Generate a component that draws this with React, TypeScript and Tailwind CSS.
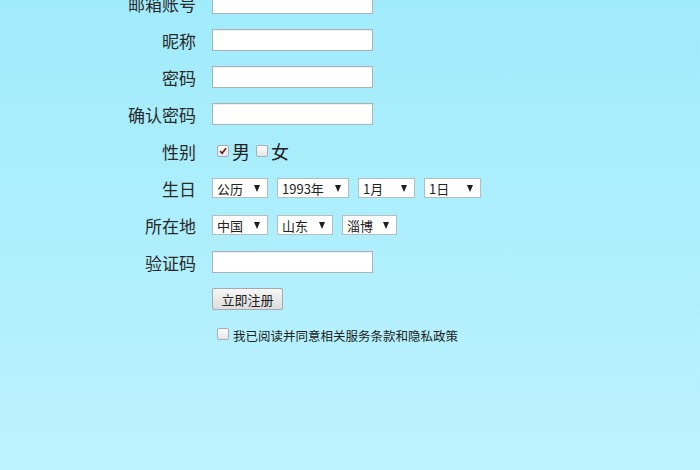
import { useState } from "react";

const FONT = "font-['Noto_Sans_CJK_SC',_'Noto_Sans',_sans-serif]";

function Row({ label, children }: { label?: string; children: React.ReactNode }) {
  return (
    <div className="flex h-[22px] items-center">
      <label className="w-[196px] shrink-0 text-right text-[17px] leading-none text-[#2a2a2a]">{label}</label>
      <div className="ml-[16px] flex items-center">{children}</div>
    </div>
  );
}

function TextInput({ type = "text" }: { type?: string }) {
  return (
    <input
      type={type}
      className="h-[22px] w-[161px] border border-[#a9b3ba] bg-white px-1 text-[13px] shadow-[inset_0_1px_1px_rgba(0,0,0,0.08)] outline-none"
    />
  );
}

function Select({ value, width }: { value: string; width: string }) {
  return (
    <div
      role="combobox"
      className={`flex h-[20px] items-center justify-between border border-[#b5bcc2] bg-white pl-[4px] pr-[7px] text-[13px] leading-none text-[#222] ${width}`}
    >
      <span>{value}</span>
      <svg viewBox="0 0 6 7" className="h-[7px] w-[6px]">
        <path d="M0 0 H6 L3 7 Z" fill="#1e1e1e" />
      </svg>
    </div>
  );
}

function Box({ checked }: { checked?: boolean }) {
  return (
    <span className="flex h-[12px] w-[12px] items-center justify-center rounded-[2px] border border-[#a8adb3] bg-gradient-to-b from-[#fdfdfd] to-[#e4e6e8]">
      {checked ? (
        <svg viewBox="0 0 12 12" className="h-[10px] w-[10px]">
          <path d="M2.5 6.2 L5 8.8 L9.6 2.6" fill="none" stroke="#6b1d24" strokeWidth="2" />
        </svg>
      ) : null}
    </span>
  );
}

export default function App() {
  const [male, setMale] = useState(true);
  const [agree, setAgree] = useState(false);

  return (
    <div className={`min-h-[470px] overflow-hidden bg-gradient-to-b from-[#a0ebfb] to-[#bcf2fd] ${FONT}`}>
      <div className="-mt-[8px] flex flex-col gap-[15px]">
        <Row label="邮箱账号">
          <TextInput />
        </Row>
        <Row label="昵称">
          <TextInput />
        </Row>
        <Row label="密码">
          <TextInput type="password" />
        </Row>
        <Row label="确认密码">
          <TextInput type="password" />
        </Row>
        <Row label="性别">
          <div className="flex items-center pl-[5px] text-[18px] leading-none text-[#222]">
            <button type="button" onClick={() => setMale(true)}>
              <Box checked={male} />
            </button>
            <span className="ml-[3px]">男</span>
            <button type="button" className="ml-[6px]" onClick={() => setMale(false)}>
              <Box checked={!male} />
            </button>
            <span className="ml-[3px]">女</span>
          </div>
        </Row>
        <Row label="生日">
          <div className="flex gap-[9px]">
            <Select value="公历" width="w-[56px]" />
            <Select value="1993年" width="w-[72px]" />
            <Select value="1月" width="w-[57px]" />
            <Select value="1日" width="w-[57px]" />
          </div>
        </Row>
        <Row label="所在地">
          <div className="flex gap-[9px]">
            <Select value="中国" width="w-[56px]" />
            <Select value="山东" width="w-[56px]" />
            <Select value="淄博" width="w-[55px]" />
          </div>
        </Row>
        <Row label="验证码">
          <TextInput />
        </Row>
        <Row>
          <button
            type="button"
            className="h-[22px] w-[71px] rounded-[2px] border border-[#a3a9ae] bg-gradient-to-b from-[#f6f6f6] to-[#dcdcdc] text-[13px] leading-none text-[#222]"
          >
            立即注册
          </button>
        </Row>
        <Row>
          <div className="flex items-center pl-[5px] text-[12.5px] leading-none text-[#222]">
            <button type="button" className="-mt-[4px]" onClick={() => setAgree(!agree)}>
              <Box checked={agree} />
            </button>
            <span className="ml-[4px]">我已阅读并同意相关服务条款和隐私政策</span>
          </div>
        </Row>
      </div>
    </div>
  );
}
